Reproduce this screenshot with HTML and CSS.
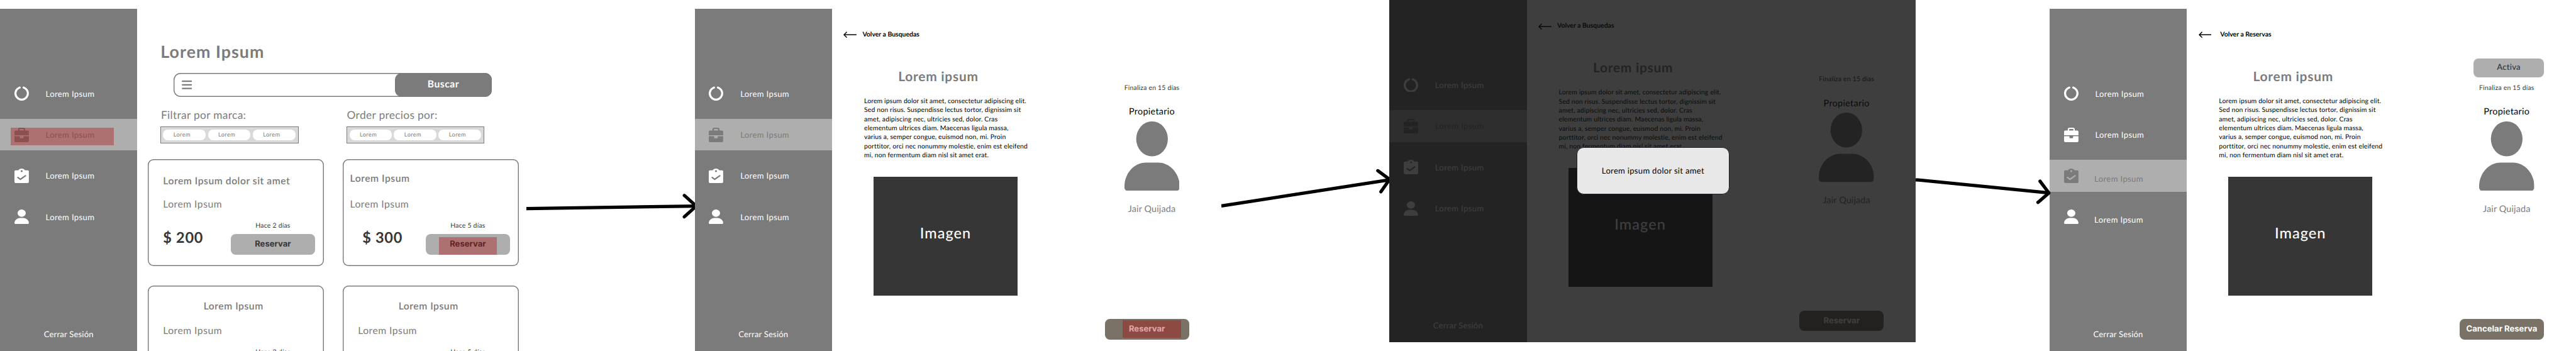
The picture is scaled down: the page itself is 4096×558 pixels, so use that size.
FILE: index.html
```html
<!DOCTYPE html>
<html lang="es">
<head>
<meta charset="utf-8">
<title>Flujo de reserva</title>
<link rel="stylesheet" href="styles.css">
</head>
<body>
<svg class="sprite" aria-hidden="true">
  <symbol id="i-ring" viewBox="0 0 35 35"><path d="M12.7 3.4A15 15 0 1 0 22.3 3.4" fill="none" stroke="currentColor" stroke-width="5" stroke-linecap="round"/></symbol>
  <symbol id="i-case" viewBox="0 0 35 35"><path fill="currentColor" fill-rule="evenodd" d="M9 7V4A4 4 0 0 1 13 0H22A4 4 0 0 1 26 4V7H32A3 3 0 0 1 35 10V18.3H0V10A3 3 0 0 1 3 7ZM12.3 7H22.7V4.2A1.2 1.2 0 0 0 21.500 3H13.500A1.200 1.200 0 0 0 12.300 4.200ZM0 20.700H13V23.500A2 2 0 0 0 15 25.500H20A2 2 0 0 0 22 23.500V20.700H35V32A3 3 0 0 1 32 35H3A3 3 0 0 1 0 32Z"/></symbol>
  <symbol id="i-clip" viewBox="0 0 35 35"><path fill="currentColor" fill-rule="evenodd" d="M3 4.300H9.500C11 1.500 14 0 17.500 0S24 1.500 25.500 4.300H32A3 3 0 0 1 35 7.300V32A3 3 0 0 1 32 35H3A3 3 0 0 1 0 32V7.300A3 3 0 0 1 3 4.300ZM17.500 4A2.500 2.300 0 1 0 17.500 8.600A2.500 2.300 0 1 0 17.500 4ZM9.300 20.300A1.700 1.700 0 0 0 7.300 23.100L13.400 27.600A1.700 1.700 0 0 0 15.400 27.600L27.800 18.900A1.700 1.700 0 0 0 25.800 16.100L14.400 24.100Z"/></symbol>
  <symbol id="i-user" viewBox="0 0 35 35"><g fill="currentColor"><ellipse cx="17.500" cy="8.900" rx="10" ry="8.900"/><path d="M14 20.500H21C29 20.500 35 26.500 35 33A2 2 0 0 1 33 35H2A2 2 0 0 1 0 33C0 26.500 6 20.500 14 20.500Z"/></g></symbol>
  <symbol id="i-avatar" viewBox="0 0 134 169"><g fill="currentColor"><ellipse cx="67" cy="42.500" rx="38.500" ry="42.500"/><path d="M52 100H82C111 100 134 127 134 157V161A8 8 0 0 1 126 169H8A8 8 0 0 1 0 161V157C0 127 23 100 52 100Z"/></g></symbol>
  <symbol id="i-back" viewBox="0 0 32 16"><path d="M8.500 1L1.500 8L8.500 15M1.500 8H32" fill="none" stroke="currentColor" stroke-width="2.200"/></symbol>
</svg>

<div class="board">

  <section class="frame">
    <nav class="sidebar">
      <a class="item"><svg class="icon"><use href="#i-ring"/></svg><span class="label">Lorem Ipsum</span></a>
      <a class="item active"><svg class="icon"><use href="#i-case"/></svg><span class="label">Lorem Ipsum</span><i class="mark mark-nav"></i></a>
      <a class="item"><svg class="icon"><use href="#i-clip"/></svg><span class="label">Lorem Ipsum</span></a>
      <a class="item"><svg class="icon"><use href="#i-user"/></svg><span class="label">Lorem Ipsum</span></a>
      <a class="logout">Cerrar Sesión</a>
    </nav>
    <main class="main">
      <h1 class="page-title">Lorem Ipsum</h1>
      <div class="search">
        <svg class="menu" viewBox="0 0 25 21"><path d="M1.800 1.800H23.200M1.800 10.500H23.200M1.800 19.200H23.200" stroke="currentColor" stroke-width="3.500" stroke-linecap="round"/></svg>
        <button class="search-btn">Buscar</button>
      </div>
      <div class="filters">
        <div class="filter">
          <div class="filter-label">Filtrar por marca:</div>
          <div class="pills"><span class="pill">Lorem</span><span class="pill">Lorem</span><span class="pill">Lorem</span></div>
        </div>
        <div class="filter order">
          <div class="filter-label">Order precios por:</div>
          <div class="pills"><span class="pill">Lorem</span><span class="pill">Lorem</span><span class="pill">Lorem</span></div>
        </div>
      </div>
      <div class="cards">
        <article class="card">
          <h2 class="card-title">Lorem Ipsum dolor sit amet</h2>
          <p class="card-sub">Lorem Ipsum</p>
          <div class="card-foot"><span class="price">$ 200</span>
            <div class="action"><span class="date">Hace 2 días</span><button class="btn">Reservar</button></div></div>
        </article>
        <article class="card near">
          <h2 class="card-title">Lorem Ipsum</h2>
          <p class="card-sub">Lorem Ipsum</p>
          <div class="card-foot"><span class="price">$ 300</span>
            <div class="action"><span class="date">Hace 5 días</span><button class="btn">Reservar<i class="mark mark-card"></i></button></div></div>
        </article>
        <article class="card centered">
          <h2 class="card-title">Lorem Ipsum</h2>
          <p class="card-sub">Lorem Ipsum</p>
          <div class="card-foot"><div class="action"><span class="date">Hace 2 días</span></div></div>
        </article>
        <article class="card centered">
          <h2 class="card-title">Lorem Ipsum</h2>
          <p class="card-sub">Lorem Ipsum</p>
          <div class="card-foot"><div class="action"><span class="date">Hace 5 días</span></div></div>
        </article>
      </div>
    </main>
  </section>

  <svg class="link" viewBox="0 0 409 853"><g fill="none" stroke="#000" stroke-width="8"><path d="M0 507L413 501"/><path d="M384 475L413 501L384 527" stroke-linecap="round" stroke-linejoin="round"/></g></svg>

  <section class="frame">
    <nav class="sidebar">
      <a class="item"><svg class="icon"><use href="#i-ring"/></svg><span class="label">Lorem Ipsum</span></a>
      <a class="item active"><svg class="icon"><use href="#i-case"/></svg><span class="label">Lorem Ipsum</span></a>
      <a class="item"><svg class="icon"><use href="#i-clip"/></svg><span class="label">Lorem Ipsum</span></a>
      <a class="item"><svg class="icon"><use href="#i-user"/></svg><span class="label">Lorem Ipsum</span></a>
      <a class="logout">Cerrar Sesión</a>
    </nav>
    <main class="main detail">
      <a class="back"><svg class="back-icon"><use href="#i-back"/></svg><span>Volver a Busquedas</span></a>
      <div class="columns">
        <div class="info">
          <h1 class="detail-title">Lorem ipsum</h1>
          <p class="text">Lorem ipsum dolor sit amet, consectetur adipiscing elit.<br>Sed non risus. Suspendisse lectus tortor, dignissim sit<br>amet, adipiscing nec, ultricies sed, dolor. Cras<br>elementum ultrices diam. Maecenas ligula massa,<br>varius a, semper congue, euismod non, mi. Proin<br>porttitor, orci nec nonummy molestie, enim est eleifend<br>mi, non fermentum diam nisl sit amet erat.</p>
          <div class="image">Imagen</div>
        </div>
        <aside class="side">
          <div class="status"></div>
          <div class="owner">
            <span class="deadline">Finaliza en 15 días</span>
            <span class="owner-label">Propietario</span>
            <svg class="avatar"><use href="#i-avatar"/></svg>
            <span class="owner-name">Jair Quijada</span>
          </div>
          <button class="btn primary">Reservar<i class="mark mark-detail"></i></button>
        </aside>
      </div>
    </main>
  </section>

  <svg class="link" viewBox="0 0 409 853"><g fill="none" stroke="#000" stroke-width="8"><path d="M0 500.500L409 437"/><path d="M380.500 415L409 436L388 466" stroke-linecap="round" stroke-linejoin="round"/></g></svg>

  <section class="frame raised">
    <nav class="sidebar">
      <a class="item"><svg class="icon"><use href="#i-ring"/></svg><span class="label">Lorem Ipsum</span></a>
      <a class="item active"><svg class="icon"><use href="#i-case"/></svg><span class="label">Lorem Ipsum</span></a>
      <a class="item"><svg class="icon"><use href="#i-clip"/></svg><span class="label">Lorem Ipsum</span></a>
      <a class="item"><svg class="icon"><use href="#i-user"/></svg><span class="label">Lorem Ipsum</span></a>
      <a class="logout">Cerrar Sesión</a>
    </nav>
    <main class="main detail">
      <a class="back"><svg class="back-icon"><use href="#i-back"/></svg><span>Volver a Busquedas</span></a>
      <div class="columns">
        <div class="info">
          <h1 class="detail-title">Lorem ipsum</h1>
          <p class="text">Lorem ipsum dolor sit amet, consectetur adipiscing elit.<br>Sed non risus. Suspendisse lectus tortor, dignissim sit<br>amet, adipiscing nec, ultricies sed, dolor. Cras<br>elementum ultrices diam. Maecenas ligula massa,<br>varius a, semper congue, euismod non, mi. Proin<br>porttitor, orci nec nonummy molestie, enim est eleifend<br>mi, non fermentum diam nisl sit amet erat.</p>
          <div class="image">Imagen</div>
        </div>
        <aside class="side">
          <div class="status"></div>
          <div class="owner">
            <span class="deadline">Finaliza en 15 días</span>
            <span class="owner-label">Propietario</span>
            <svg class="avatar"><use href="#i-avatar"/></svg>
            <span class="owner-name">Jair Quijada</span>
          </div>
          <button class="btn primary">Reservar</button>
        </aside>
      </div>
    </main>
    <div class="overlay"><div class="dialog">Lorem ipsum dolor sit amet</div></div>
  </section>

  <svg class="link last" viewBox="0 0 325 853"><g fill="none" stroke="#000" stroke-width="8"><path d="M0 437L324 469"/><path d="M302.500 440.500L324 469L297.500 492" stroke-linecap="round" stroke-linejoin="round"/></g></svg>

  <section class="frame reserved">
    <nav class="sidebar">
      <a class="item"><svg class="icon"><use href="#i-ring"/></svg><span class="label">Lorem Ipsum</span></a>
      <a class="item"><svg class="icon"><use href="#i-case"/></svg><span class="label">Lorem Ipsum</span></a>
      <a class="item active low"><svg class="icon"><use href="#i-clip"/></svg><span class="label">Lorem Ipsum</span></a>
      <a class="item low"><svg class="icon"><use href="#i-user"/></svg><span class="label">Lorem Ipsum</span></a>
      <a class="logout">Cerrar Sesión</a>
    </nav>
    <main class="main detail">
      <a class="back"><svg class="back-icon"><use href="#i-back"/></svg><span>Volver a Reservas</span></a>
      <div class="columns">
        <div class="info">
          <h1 class="detail-title">Lorem ipsum</h1>
          <p class="text">Lorem ipsum dolor sit amet, consectetur adipiscing elit.<br>Sed non risus. Suspendisse lectus tortor, dignissim sit<br>amet, adipiscing nec, ultricies sed, dolor. Cras<br>elementum ultrices diam. Maecenas ligula massa,<br>varius a, semper congue, euismod non, mi. Proin<br>porttitor, orci nec nonummy molestie, enim est eleifend<br>mi, non fermentum diam nisl sit amet erat.</p>
          <div class="image">Imagen</div>
        </div>
        <aside class="side">
          <div class="status"><span class="badge">Activa</span></div>
          <div class="owner">
            <span class="deadline">Finaliza en 15 días</span>
            <span class="owner-label">Propietario</span>
            <svg class="avatar"><use href="#i-avatar"/></svg>
            <span class="owner-name">Jair Quijada</span>
          </div>
          <button class="btn primary">Cancelar Reserva</button>
        </aside>
      </div>
    </main>
  </section>

</div>
</body>
</html>
```
FILE: styles.css
```css
/* 1rem = 100 design pixels */
html { font-size: 65.4px; overflow: hidden; background: #fff; }
* { box-sizing: border-box; }
body { margin: 0; font-family: Lato, "Open Sans", sans-serif; color: #000; text-rendering: geometricPrecision; }
h1, h2, p { margin: 0; }
button { border: 0; padding: 0; font-family: inherit; text-rendering: inherit; }
.sprite { position: absolute; width: 0; height: 0; }

.board { display: flex; align-items: flex-start; width: 62.63rem; height: 558px; overflow: hidden; }
.frame { position: relative; z-index: 1; flex: none; display: flex; width: 12.8rem; height: 8.32rem; margin-top: .21rem; background: #fff; overflow: hidden; }
.frame.raised { margin-top: 0; }
.link { flex: none; width: 4.09rem; height: 8.53rem; overflow: visible; }
.link.last { position: relative; z-index: 2; width: 3.25rem; }

/* Sidebar */
.sidebar { flex: none; display: flex; flex-direction: column; gap: .23rem; width: 3.34rem; padding: 1.68rem 0 .31rem; background: #7b7b7b; color: #fff; font-size: .2rem; line-height: 1; letter-spacing: .0056rem; }
.item { position: relative; display: flex; align-items: center; gap: .41rem; height: .77rem; padding-left: .35rem; }
.item.active { background: #aeaeae; color: #7b7b7b; }
.icon { width: .35rem; height: .35rem; }
.label { padding-top: .01rem; }
.item.low .label { padding-top: .14rem; margin-left: -.02rem; }
.logout { margin-top: auto; padding-left: 1.065rem; letter-spacing: .0028rem; }

/* Click highlights */
.mark { position: absolute; width: 1.41rem; height: .43rem; background: rgba(174, 0, 0, .35); }
.mark-nav { left: .26rem; top: .22rem; width: 2.51rem; }
.mark-card { left: .32rem; top: .07rem; }
.mark-detail { left: .44rem; top: .03rem; }

/* Search page */
.main { flex: 1; display: flex; flex-direction: column; }
.page-title { padding: .85rem 0 0 .565rem; font-size: .41rem; line-height: 1; letter-spacing: .0156rem; color: #7b7b7b; }
.search { display: flex; align-items: center; justify-content: space-between; width: 7.74rem; height: .58rem; margin: .31rem 0 0 .88rem; padding-left: .2rem; border-radius: .17rem; box-shadow: inset 0 0 0 .022rem #7b7b7b; color: #7b7b7b; }
.menu { width: .25rem; height: .21rem; }
.search-btn { width: 2.36rem; height: .58rem; padding-bottom: .03rem; border-radius: .17rem; background: #7b7b7b; color: #fff; font-size: .24rem; font-weight: 700; letter-spacing: .008rem; }
.filters { display: flex; gap: 1.16rem; padding: .305rem 0 0 .56rem; color: #7b7b7b; }
.filter { width: 3.36rem; }
.filter-label { padding-left: .015rem; font-size: .265rem; line-height: 1; letter-spacing: .005rem; white-space: nowrap; }
.pills { display: flex; align-items: center; justify-content: space-between; height: .4rem; margin-top: .15rem; padding: 0 .065rem 0 .05rem; border: 1px solid #7b7b7b; background: #d9d9d9; }
.order .pills { padding-left: .06rem; }
.pill { width: 1.035rem; height: .27rem; padding: .055rem 0 0 .25rem; border-radius: .12rem; background: #fff; font-size: .14rem; line-height: 1; letter-spacing: .0067rem; }

.cards { display: grid; grid-template-columns: 4.29rem 4.29rem; gap: .47rem .45rem; padding: .39rem 0 0 .25rem; }
.card { display: flex; flex-direction: column; height: 2.6rem; padding: .434rem .22rem 0 .375rem; border-radius: .14rem; box-shadow: inset 0 0 0 .022rem #7b7b7b; color: #7b7b7b; font-size: .24rem; line-height: 1; letter-spacing: .0073rem; }
.card-title { font-size: .24rem; font-weight: 600; letter-spacing: .008rem; }
.card-sub { margin-top: .323rem; }
.card-foot { display: flex; align-items: flex-start; margin-top: .313rem; color: #363636; }
.price { padding-top: .2rem; font-size: .36rem; font-weight: 700; letter-spacing: .0112rem; }
.action { display: flex; flex-direction: column; align-items: center; gap: .11rem; width: 2.05rem; margin-left: auto; }
.date { font-size: .16rem; letter-spacing: .0034rem; }
.near { padding-top: .374rem; padding-left: .18rem; }
.near .card-sub { margin-top: .383rem; }
.near .price { padding-left: .3rem; }
.centered { padding-top: .397rem; }
.centered .card-title { padding-left: .985rem; }
.centered .card-sub { margin-top: .36rem; }

.btn { position: relative; width: 2.05rem; height: .5rem; border-radius: .12rem; background: #aeaeae; color: #363636; font: 700 .2rem/1 Inter, sans-serif; white-space: nowrap; }
.btn.primary { background: #7a7267; color: #fff; }

/* Detail page */
.back { display: flex; align-items: flex-start; gap: .14rem; height: .73rem; padding: .55rem 0 0 .28rem; font-size: .16rem; font-weight: 700; line-height: 1; }
.back-icon { width: .32rem; height: .16rem; margin-top: .01rem; }
.reserved .back { gap: .21rem; }
.columns { display: flex; justify-content: space-between; padding: 0 .78rem; }
.info { width: 4.2rem; padding-top: .766rem; }
.detail-title { padding-left: .83rem; font-size: .32rem; line-height: 1; letter-spacing: .0113rem; color: #7b7b7b; }
.text { margin-top: .327rem; font-size: .16rem; line-height: .22rem; letter-spacing: .002rem; white-space: nowrap; }
.image { display: flex; align-items: center; justify-content: center; width: 3.5rem; height: 2.9rem; margin: .397rem 0 0 .23rem; padding-bottom: .14rem; background: #363636; color: #fff; font-size: .36rem; font-weight: 500; letter-spacing: .016rem; }
.side { display: flex; flex-direction: column; width: 2.05rem; padding-top: .49rem; }
.status { display: flex; justify-content: flex-end; height: .45rem; }
.badge { display: flex; align-items: center; justify-content: center; width: 1.71rem; padding-bottom: .06rem; border-radius: .12rem; background: #aeaeae; color: #363636; font-size: .2rem; font-weight: 500; letter-spacing: .004rem; }
.owner { display: flex; flex-direction: column; align-items: center; padding: .188rem 0 0 .24rem; line-height: 1; }
.deadline { font-size: .16rem; letter-spacing: .003rem; color: #363636; }
.owner-label { margin-top: .392rem; font-size: .22rem; font-weight: 400; letter-spacing: .0045rem; }
.avatar { width: 1.34rem; height: 1.69rem; margin-top: .11rem; color: #7b7b7b; }
.owner-name { margin-top: .345rem; font-size: .22rem; letter-spacing: .0022rem; color: #7b7b7b; }
.side .btn { margin-top: 2.555rem; }

/* Modal */
.overlay { position: absolute; inset: 0; padding: 3.585rem 0 0 4.55rem; background: rgba(13, 13, 13, .795); }
.dialog { display: flex; align-items: center; justify-content: center; width: 3.72rem; height: 1.145rem; padding-bottom: .03rem; border: 1px solid #22222c; border-radius: .17rem; background: #e8e8e8; font-size: .2rem; font-weight: 400; letter-spacing: .0045rem; }
```
